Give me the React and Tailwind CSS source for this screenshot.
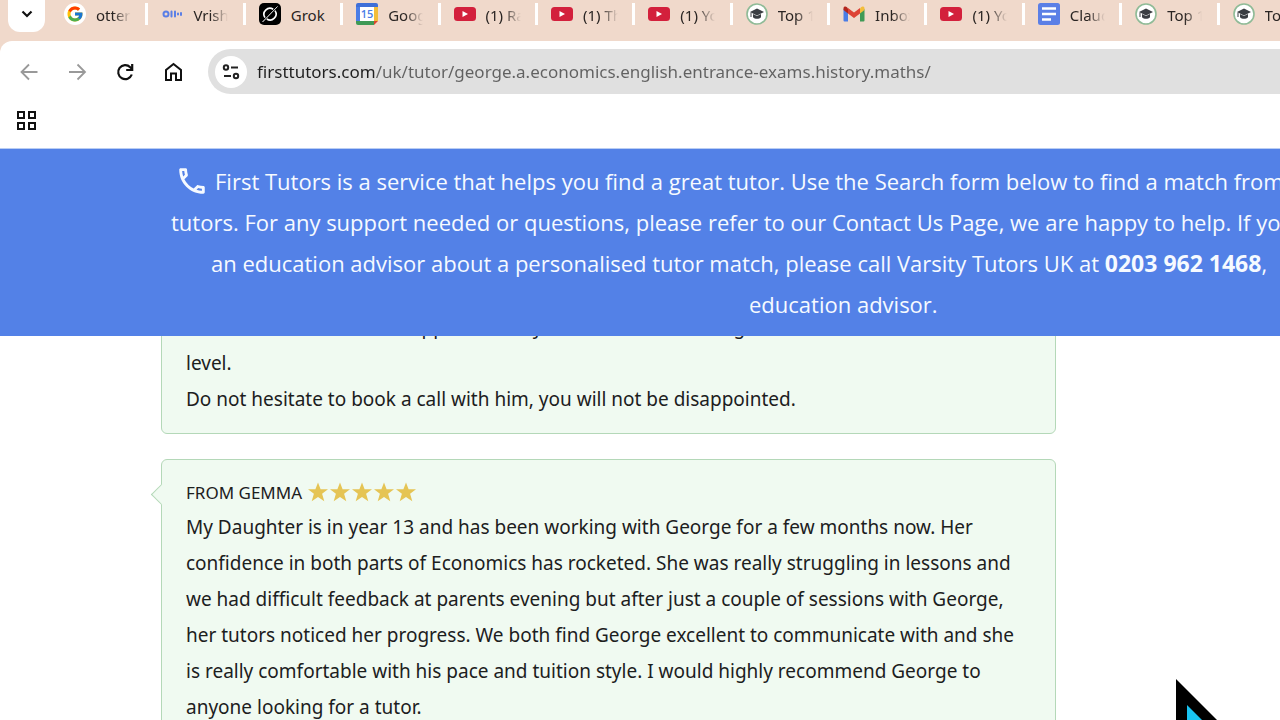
import { FcGoogle } from "react-icons/fc";
import { MdOutlineCall } from "react-icons/md";

function OtterIcon() {
  return (
    <svg viewBox="0 0 22 22" className="size-[22px]" fill="none" stroke="#5b7fe6" strokeWidth="2" strokeLinecap="round">
      <circle cx="5" cy="11" r="2.5" />
      <path d="M10.5 8.5v5M14 8.5v5M17 10.5v1M20 10v2" />
    </svg>
  );
}

function GrokIcon() {
  return (
    <svg viewBox="0 0 22 22" className="size-[22px]">
      <rect width="22" height="22" rx="5" fill="#000" />
      <path d="M14.2 6.2A6 6 0 0 0 6 14.6M7.8 16A6 6 0 0 0 16 7.6" fill="none" stroke="#fff" strokeWidth="1.6" />
      <path d="M3.5 19 18.5 3.5 8.4 14z" fill="#fff" stroke="#fff" strokeWidth="0.6" />
    </svg>
  );
}

function CalendarIcon() {
  return (
    <svg viewBox="0 0 22 22" className="size-[22px]">
      <path d="M2 0h18a2 2 0 0 1 2 2v3H0V2a2 2 0 0 1 2-2z" fill="#3f6fd8" />
      <path d="M0 4h5v14H0z" fill="#4a7de6" />
      <path d="M18 4h4v14h-4z" fill="#f3bd3a" />
      <path d="M0 18h18v4H2a2 2 0 0 1-2-2z" fill="#3f9a56" />
      <path d="M18 18h4l-4 4z" fill="#d9482f" />
      <path d="M4 4h14v14H4z" fill="#fff" />
      <text x="11" y="15" textAnchor="middle" fontSize="11" fontWeight="600" fill="#4a7de6" fontFamily="Open Sans, sans-serif">15</text>
    </svg>
  );
}

function YoutubeIcon() {
  return (
    <svg viewBox="0 0 22 22" className="size-[22px]">
      <rect y="4" width="22" height="14" rx="3.5" fill="#d3203c" />
      <path d="M8.5 8v6l5.5-3z" fill="#fff" />
    </svg>
  );
}

function CapIcon() {
  return (
    <svg viewBox="0 0 22 22" className="size-[22px]">
      <circle cx="11" cy="11" r="10" fill="#fff" stroke="#8fbb97" strokeWidth="1.6" />
      <path d="M11 5.5 4 9l7 3.5L18 9z" fill="#3a3d42" />
      <path d="M7 11v3.2c2 2 6 2 8 0V11l-4 2z" fill="#3a3d42" />
      <path d="M5 9.5V14" stroke="#3a3d42" strokeWidth="1" />
    </svg>
  );
}

function GmailIcon() {
  return (
    <svg viewBox="0 0 22 22" className="size-[22px]">
      <path d="M0.5 6v11.5q0 1 1 1H5V9z" fill="#4a7de6" />
      <path d="M21.5 6v11.5q0 1-1 1H17V9z" fill="#3f9a56" />
      <path d="M17 5.5v5l4.5-3.4V5.5C21.5 3.5 19.5 3 18 4.2z" fill="#f3bd3a" />
      <path d="M5 5.5v5L.5 7.1V5.5C.5 3.5 2.5 3 4 4.2z" fill="#b3261e" />
      <path d="M5 5v5.5l6 4.5 6-4.5V5l-6 4.5z" fill="#dd4335" />
    </svg>
  );
}

function DocsIcon() {
  return (
    <svg viewBox="0 0 22 22" className="size-[22px]">
      <rect width="22" height="22" rx="2.5" fill="#5b7fe6" />
      <path d="M4 5.5h14M4 11h14M4 16.5h9" stroke="#fff" strokeWidth="2.4" />
    </svg>
  );
}

function Star() {
  return (
    <svg viewBox="0 0 22 22" className="size-[22px]" fill="#e5c454">
      <path d="M11 .5 13.6 7.3h7.4l-5.9 4.5 2.2 7.4L11 15l-6.3 4.2 2.2-7.4L1 7.3h7.4z" />
    </svg>
  );
}

const tabs = [
  { title: "otter", icon: <span className="flex size-[22px] items-center justify-center rounded-full bg-white"><FcGoogle size={18} /></span> },
  { title: "Vrish", icon: <OtterIcon /> },
  { title: "Grok", icon: <GrokIcon />, full: true },
  { title: "Goog", icon: <CalendarIcon /> },
  { title: "(1) Ra", icon: <YoutubeIcon /> },
  { title: "(1) Th", icon: <YoutubeIcon /> },
  { title: "(1) Yo", icon: <YoutubeIcon /> },
  { title: "Top 1", icon: <CapIcon /> },
  { title: "Inbox", icon: <GmailIcon /> },
  { title: "(1) Yo", icon: <YoutubeIcon /> },
  { title: "Claud", icon: <DocsIcon /> },
  { title: "Top 1", icon: <CapIcon /> },
  { title: "Top 1", icon: <CapIcon /> },
];

function TabStrip() {
  return (
    <div className="flex h-[41px] items-start bg-[#f0d9cb]">
      <button aria-label="Search tabs" className="ml-2 flex h-8 w-[37px] shrink-0 items-center justify-center rounded-b-xl bg-white">
        <svg viewBox="0 0 12 8" className="mb-1 h-2 w-3" fill="none" stroke="#111" strokeWidth="2.2">
          <path d="m1.5 1.5 4.5 4.5 4.5-4.5" />
        </svg>
      </button>
      <div className="ml-[6px] grid w-[1266px] shrink-0 grid-cols-13 pt-[3px]">
        {tabs.map((t, i) => (
          <button key={i} className="flex h-[22px] items-center gap-2.5 border-r-3 border-white pl-[13px]">
            <span className="shrink-0">{t.icon}</span>
            <span className={`w-[35px] overflow-hidden pt-0.5 text-left text-[15px] leading-6 whitespace-nowrap text-[#2a2523] ${t.full ? "" : "[mask-image:linear-gradient(90deg,#000_50%,transparent)]"}`}>
              {t.title}
            </span>
          </button>
        ))}
      </div>
    </div>
  );
}

function Toolbar() {
  return (
    <div className="bg-[#f0d9cb]">
      <div className="h-[108px] rounded-tl-xl border-b border-[#b9cdf3] bg-white pt-2">
        <div className="flex h-[45px] items-center">
          <div className="flex w-[208px] shrink-0 gap-6 pl-[17px]">
            <button aria-label="Back">
              <svg viewBox="0 0 24 24" className="size-6" fill="none" stroke="#999" strokeWidth="1.8">
                <path d="M20.5 12H5M12 4.5 4.5 12l7.5 7.5" />
              </svg>
            </button>
            <button aria-label="Forward">
              <svg viewBox="0 0 24 24" className="size-6" fill="none" stroke="#999" strokeWidth="1.8">
                <path d="M4 12h15.5M12.5 4.5 20 12l-7.5 7.5" />
              </svg>
            </button>
            <button aria-label="Reload">
              <svg viewBox="0 0 24 24" className="size-6" fill="none" stroke="#111" strokeWidth="2.2">
                <path d="M18.8 14.5A7 7 0 1 1 17.2 7.2L19 9" />
                <path d="M19.2 4v6h-6" />
              </svg>
            </button>
            <button aria-label="Home">
              <svg viewBox="0 0 24 24" className="size-6" fill="none" stroke="#111" strokeWidth="2">
                <path d="M5 20V10l7.5-6 7.5 6v10h-5v-6.5h-5V20z" />
              </svg>
            </button>
          </div>
          <div className="flex h-full flex-1 items-center rounded-l-full bg-[#e0e0e0] pl-[7px]">
            <button aria-label="View site information" className="flex size-8 shrink-0 items-center justify-center rounded-full bg-white">
              <svg viewBox="0 0 18 18" className="size-[18px]" fill="none" stroke="#222" strokeWidth="2">
                <circle cx="4" cy="4.5" r="2.2" />
                <path d="M9 4.5h7M2 13h7" />
                <circle cx="14" cy="13" r="2.2" />
              </svg>
            </button>
            <input
              type="text"
              aria-label="Address"
              defaultValue="firsttutors.com/uk/tutor/george.a.economics.english.entrance-exams.history.maths/"
              className="ml-2.5 h-8 min-w-0 flex-1 bg-[linear-gradient(90deg,#1f1f1f_119px,#616161_119px)] bg-clip-text text-[17px] text-transparent outline-none"
            />
          </div>
        </div>
        <button aria-label="Apps" className="mt-[17px] ml-[17px] block">
          <svg viewBox="0 0 19 19" className="size-[19px]" fill="none" stroke="#111" strokeWidth="2">
            <path d="M1 1h6v6h-6zM12 1h6v6h-6zM1 12h6v6h-6zM12 12h6v6h-6z" />
          </svg>
        </button>
      </div>
    </div>
  );
}

function Banner() {
  return (
    <div className="relative z-10 overflow-hidden bg-[#5381e7] pt-3 pb-[11px] font-['Open_Sans',sans-serif] text-[22px] leading-[41px] whitespace-nowrap text-[#f6faff]">
      <div className="flex items-center pl-[175px]">
        <MdOutlineCall size={34} className="mr-[6px] mb-0.5 shrink-0" />
        First Tutors is a service that helps you find a great tutor. Use the Search form below to find a match from
      </div>
      <div className="pl-[171px]">
        tutors. For any support needed or questions, please refer to our Contact Us Page, we are happy to help. If you
      </div>
      <div className="pl-[211px]">
        an education advisor about a personalised tutor match, please call Varsity Tutors UK at{" "}
        <b className="text-[23px]">0203 962 1468</b>,
      </div>
      <div className="pl-[749px]">education advisor.</div>
    </div>
  );
}

const reviews = [
  {
    lines: [
      "I am so thankful for the support and my son feels much stronger at this",
      "level.",
      "Do not hesitate to book a call with him, you will not be disappointed.",
    ],
  },
  {
    from: "FROM GEMMA",
    lines: [
      "My Daughter is in year 13 and has been working with George for a few months now. Her",
      "confidence in both parts of Economics has rocketed. She was really struggling in lessons and",
      "we had difficult feedback at parents evening but after just a couple of sessions with George,",
      "her tutors noticed her progress. We both find George excellent to communicate with and she",
      "is really comfortable with his pace and tuition style. I would highly recommend George to",
      "anyone looking for a tutor.",
    ],
  },
];

function Review({ review }) {
  return (
    <article className="relative mb-[25px] rounded-md border border-[#b4d8b8] bg-[#f0faf1] px-6 py-4">
      {review.from && (
        <>
          <div className="absolute top-[27px] -left-2 size-[15px] rotate-45 border-b border-l border-[#b4d8b8] bg-[#f0faf1]" />
          <div className="flex h-[33px] items-center gap-[5px]">
            <h3 className="text-[17px]">{review.from}</h3>
            <div className="flex" role="img" aria-label="5 stars">
              {[1, 2, 3, 4, 5].map((n) => (
                <Star key={n} />
              ))}
            </div>
          </div>
        </>
      )}
      <p className="text-[19px] leading-9 whitespace-nowrap">
        {review.lines.map((l) => (
          <span key={l} className="block">{l}</span>
        ))}
      </p>
    </article>
  );
}

export default function App() {
  return (
    <div className="relative h-screen overflow-hidden bg-white font-['Noto_Sans',sans-serif] text-[#1c201d]">
      <TabStrip />
      <Toolbar />
      <Banner />
      <main className="-mt-11 ml-[161px] max-w-[895px]">
        {reviews.map((r, i) => (
          <Review key={i} review={r} />
        ))}
      </main>
      <svg viewBox="0 0 64 64" className="absolute top-[679px] left-[1176px] size-16">
        <path d="M0 0v64h64z" fill="#000" />
        <path d="M11 26v38h38z" fill="#19c4f2" />
      </svg>
    </div>
  );
}
